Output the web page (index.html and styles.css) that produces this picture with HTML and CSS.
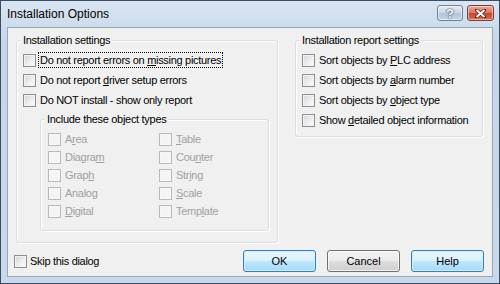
FILE: index.html
```html
<!DOCTYPE html>
<html lang="en">
<head>
    <meta charset="UTF-8">
    <title>Installation Options</title>
    <link rel="stylesheet" href="styles.css">
</head>
<body>
    <div class="window">
        <div class="titlebar">
            <span class="title">Installation Options</span>
            <div class="caption-btns">
                <span class="cbtn cbtn-help">?</span>
                <span class="cbtn cbtn-close">
                    <svg width="11" height="9" viewBox="0 0 11 9"><path d="M1.5 1 L9.5 8 M9.5 1 L1.5 8" stroke="#5a1e14" stroke-width="3.4" stroke-linecap="round"/><path d="M1.5 1 L9.5 8 M9.5 1 L1.5 8" stroke="#fff" stroke-width="2"/></svg>
                </span>
            </div>
        </div>

        <div class="client">
            <div class="groups">
                <fieldset class="group group-main">
                    <legend>Installation settings</legend>
                    <div class="rows">
                        <label class="check"><span class="box"></span><span class="focus">Do not report errors on <u>m</u>issing pictures</span></label>
                        <label class="check"><span class="box"></span><span>Do not report <u>d</u>river setup errors</span></label>
                        <label class="check"><span class="box"></span><span>Do NOT install - show only report</span></label>
                    </div>

                    <fieldset class="group group-types">
                        <legend>Include these object types</legend>
                        <div class="types">
                            <label class="check off"><span class="box"></span><span>A<u>r</u>ea</span></label>
                            <label class="check off"><span class="box"></span><span>Diagra<u>m</u></span></label>
                            <label class="check off"><span class="box"></span><span>Grap<u>h</u></span></label>
                            <label class="check off"><span class="box"></span><span>Analo<u>g</u></span></label>
                            <label class="check off"><span class="box"></span><span><u>D</u>igital</span></label>
                            <label class="check off"><span class="box"></span><span><u>T</u>able</span></label>
                            <label class="check off"><span class="box"></span><span>Cou<u>n</u>ter</span></label>
                            <label class="check off"><span class="box"></span><span>Str<u>i</u>ng</span></label>
                            <label class="check off"><span class="box"></span><span><u>S</u>cale</span></label>
                            <label class="check off"><span class="box"></span><span>Temp<u>l</u>ate</span></label>
                        </div>
                    </fieldset>
                </fieldset>

                <fieldset class="group group-report">
                    <legend>Installation report settings</legend>
                    <div class="rows">
                        <label class="check"><span class="box"></span><span>Sort objects by <u>P</u>LC address</span></label>
                        <label class="check"><span class="box"></span><span>Sort objects by <u>a</u>larm number</span></label>
                        <label class="check"><span class="box"></span><span>Sort objects by <u>o</u>bject type</span></label>
                        <label class="check"><span class="box"></span><span>Show <u>d</u>etailed object information</span></label>
                    </div>
                </fieldset>
            </div>

            <div class="footer">
                <label class="check skip"><span class="box"></span><span>Skip this dialog</span></label>
                <div class="buttons">
                    <button class="btn btn-blue">OK</button>
                    <button class="btn">Cancel</button>
                    <button class="btn btn-blue">Help</button>
                </div>
            </div>
        </div>
    </div>
</body>
</html>
```

FILE: styles.css
```css
body {
    margin: 0;
    padding: 0;
    background-color: #fff;
    font-family: 'Liberation Sans', Arial, sans-serif;
    font-size: 11px;
    letter-spacing: -0.3px;
    color: #000;
}
.window {
    width: 500px;
    height: 284px;
    box-sizing: border-box;
    border: 1px solid #3a4e63;
    padding: 0 6px 6px 6px;
    background: linear-gradient(#dae5f2, #c6d6e9 40px, #c9d8ea);
    display: flex;
    flex-direction: column;
}
.titlebar {
    height: 26px;
    display: flex;
    align-items: flex-start;
    justify-content: space-between;
}
.title {
    font-size: 12px;
    letter-spacing: 0;
    margin-top: 6px;
    color: #000;
}
.caption-btns {
    display: flex;
    gap: 4px;
    margin-top: 4px;
    margin-right: -1px;
}
.cbtn {
    height: 14px;
    box-sizing: content-box;
    border: 1px solid #6f829a;
    border-radius: 3px;
    display: flex;
    align-items: center;
    justify-content: center;
    box-shadow: inset 0 0 0 1px rgba(255,255,255,0.5);
}
.cbtn-help {
    width: 24px;
    background: linear-gradient(#e4ebf4, #c9d6e6 50%, #b3c4d9 51%, #c4d3e4);
    color: #fff;
    font-weight: bold;
    font-size: 13px;
    letter-spacing: 0;
    text-shadow: 0 0 1px #4a5b70, 0 0 1px #4a5b70, 0 0 2px #4a5b70;
}
.cbtn-close {
    width: 25px;
    border-color: #7d3b31;
    background: linear-gradient(#e9a99b, #d7735f 50%, #c6472f 51%, #d66d55);
}
.client {
    flex: 1;
    background-color: #f0f0f0;
    border: 1px solid #93a7be;
    display: flex;
    flex-direction: column;
}
.groups {
    display: flex;
    align-items: flex-start;
    gap: 17px;
    padding: 6px 0 0 8px;
}
.group {
    margin: 0;
    padding: 0;
    border: 1px solid #d5dfe5;
    border-radius: 3px;
    box-sizing: border-box;
    box-shadow: 1px 1px 0 #fff, inset 1px 1px 0 #fff;
}
.group legend {
    margin-left: 4px;
    padding: 0 2px;
    line-height: 13px;
    background-color: #f0f0f0;
}
.group-main {
    width: 262px;
    height: 209px;
}
.group-report {
    width: 188px;
    height: 103px;
}
.rows {
    padding: 3px 0 0 6px;
}
.check {
    display: flex;
    align-items: center;
    height: 20px;
    white-space: nowrap;
}
.box {
    width: 11px;
    height: 11px;
    border: 1px solid #8e8f8f;
    margin-right: 4px;
    background: linear-gradient(135deg, #d4d4d4, #f4f4f4 70%, #fbfbfb);
    box-shadow: inset 0 0 0 1px #f3f3f3;
    flex: none;
}
.focus {
    outline: 1px dotted #000;
    outline-offset: 1px;
}
.group-types {
    width: 229px;
    height: 118px;
    margin: 3px 0 0 23px;
}
.types {
    display: grid;
    grid-template-rows: repeat(5, 18px);
    grid-template-columns: 111px 1fr;
    grid-auto-flow: column;
    padding: 4px 0 0 7px;
}
.types .check {
    height: 18px;
}
.check.off {
    color: #a0a0a0;
}
.check.off .box {
    border-color: #b9b9b9;
    background: #f4f4f4;
    box-shadow: inset 0 0 0 1px #f7f7f7;
}
.footer {
    display: flex;
    align-items: center;
    justify-content: space-between;
    margin-top: 7px;
    padding: 0 8px 0 6px;
}
.skip .box {
    margin-right: 3px;
}
.buttons {
    display: flex;
    gap: 11px;
}
.btn {
    width: 73px;
    height: 22px;
    margin: 0;
    padding: 0;
    font-family: 'Liberation Sans', Arial, sans-serif;
    font-size: 11px;
    letter-spacing: 0;
    color: #000;
    border: 1px solid #707070;
    border-radius: 3px;
    background: linear-gradient(#f2f2f2, #ebebeb 50%, #dddddd 51%, #cfcfcf);
    box-shadow: inset 0 0 0 1px rgba(255,255,255,0.7);
}
.btn-blue {
    border-color: #3c7fb1;
    background: linear-gradient(#eaf6fd, #d9f0fc 50%, #bee6fd 51%, #a7d9f5);
    box-shadow: inset 0 0 0 1px #cdecfc;
}
```
